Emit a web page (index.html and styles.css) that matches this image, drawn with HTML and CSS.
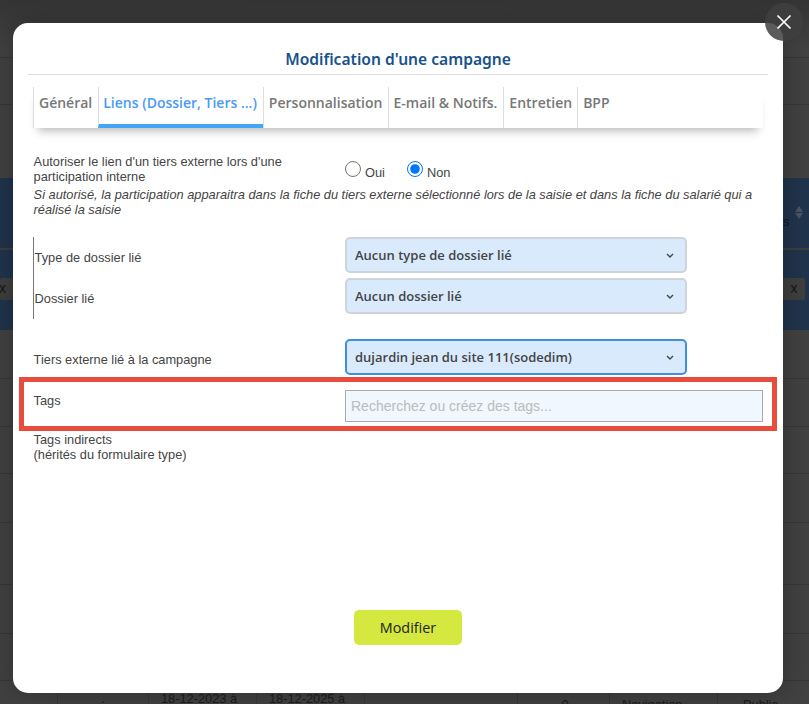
FILE: index.html
```html
<!DOCTYPE html>
<html lang="fr">
<head>
<meta charset="utf-8">
<title>Modification d'une campagne</title>
<link rel="stylesheet" href="styles.css">
</head>
<body>
<div class="table">
  <div class="row r58"></div>
  <div class="row r47"></div>
  <div class="row r74"></div>
  <div class="row blue r70"><span class="sort-s">s</span><span class="sort"><i class="up"></i><i class="down"></i></span></div>
  <div class="row blue r80"><span class="xbox xleft">x</span><span class="xbox xright">x</span></div>
  <div class="row r49"></div>
  <div class="row r48"></div>
  <div class="row r47"></div>
  <div class="row r49"></div>
  <div class="row r62"></div>
  <div class="row r49"></div>
  <div class="row r47"></div>
  <div class="row cells">
    <span class="c c1"></span>
    <span class="c c2">.</span>
    <span class="c c3">18-12-2023 à</span>
    <span class="c c3">18-12-2025 à</span>
    <span class="c c4"></span>
    <span class="c c5">0</span>
    <span class="c c6">Navigation</span>
    <span class="c c7">Public</span>
  </div>
</div>

<div class="modal">
  <h1 class="title">Modification d'une campagne</h1>
  <ul class="tabs">
    <li class="tab wide">Général</li>
    <li class="tab active shifted">Liens (Dossier, Tiers ...)</li>
    <li class="tab wide">Personnalisation</li>
    <li class="tab shifted">E-mail &amp; Notifs.</li>
    <li class="tab">Entretien</li>
    <li class="tab">BPP</li>
  </ul>
  <form class="form">
    <div class="allow">
      <div class="allow-label">Autoriser le lien d'un tiers externe lors d'une participation interne</div>
      <div class="radios">
        <label class="radio"><input type="radio" name="ext"><span>Oui</span></label>
        <label class="radio"><input type="radio" name="ext" checked><span>Non</span></label>
      </div>
    </div>
    <p class="hint">Si autorisé, la participation apparaitra dans la fiche du tiers externe sélectionné lors de la saisie et dans la fiche du salarié qui a réalisé la saisie</p>
    <div class="linked">
      <div class="field">
        <label class="field-label">Type de dossier lié</label>
        <select class="select"><option>Aucun type de dossier lié</option></select>
      </div>
      <div class="field">
        <label class="field-label">Dossier lié</label>
        <select class="select"><option>Aucun dossier lié</option></select>
      </div>
    </div>
    <div class="field third">
      <label class="field-label">Tiers externe lié à la campagne</label>
      <select class="select focus"><option>dujardin jean du site 111(sodedim)</option></select>
    </div>
    <div class="tags">
      <label class="tags-label">Tags</label>
      <input class="tags-input" type="text" placeholder="Recherchez ou créez des tags...">
    </div>
    <div class="indirect">Tags indirects<br>(hérités du formulaire type)</div>
    <div class="actions"><button type="button" class="submit">Modifier</button></div>
  </form>
</div>
<button type="button" class="close" aria-label="Fermer">
  <svg width="16" height="16" viewBox="0 0 16 16"><path d="M1.5 1.5 14.5 14.5M14.5 1.5 1.5 14.5" stroke="#fff" stroke-width="1.7" fill="none"/></svg>
</button>
</body>
</html>
```
FILE: styles.css
```css
* { box-sizing: border-box; }
html, body { margin: 0; height: 100%; }
body {
  position: relative;
  width: 809px;
  height: 704px;
  overflow: hidden;
  background: #424242;
  font-family: "Liberation Sans", Arial, sans-serif;
  font-size: 12.8px;
  color: #444;
}
.table { display: flex; flex-direction: column; height: 704px; overflow: hidden; background: #414141; }
.row { flex: none; position: relative; border-bottom: 1px solid #373737; }
.r58 { height: 58px; background: linear-gradient(#343434, #424242 50px); }
.r47 { height: 47px; }
.r74 { height: 73px; border-bottom: 0; }
.r70 { height: 72px; }
.r80 { height: 80px; }
.r49 { height: 49px; }
.r48 { height: 48px; }
.r62 { height: 62px; }
.blue { background: #20344c; border-bottom: 0; }
.r70 { border-bottom: 2px solid #3e3e3e; }
.sort-s { position: absolute; left: 783px; top: 36px; font-size: 13px; color: #151515; }
.sort { position: absolute; left: 795px; top: 28px; display: flex; flex-direction: column; gap: 1px; }
.sort i { display: block; width: 0; height: 0; border-left: 4px solid transparent; border-right: 4px solid transparent; }
.sort .up { border-bottom: 6px solid #4a5563; }
.sort .down { border-top: 6px solid #4a5563; }
.xbox {
  position: absolute; top: 28px; height: 22px; background: #3f3f3f; color: #161616;
  font-size: 14px; line-height: 21px; border-radius: 2px; text-align: center;
}
.xleft { left: 0; width: 13px; text-align: left; text-indent: -1px; }
.xright { left: 783px; width: 22px; }
.cells { display: flex; height: 23px; border: 0; color: #1c1c1c; font-size: 12.8px; }
.c { flex: none; height: 23px; border-left: 1px solid #383838; white-space: nowrap; text-align: center; line-height: 35px; }
.c1 { width: 57px; border-left: 0; }
.c2 { width: 91px; }
.c3 { width: 108px; padding-right: 7px; }
.c4 { width: 153px; }
.c5 { width: 92px; line-height: 47px; padding-left: 3px; }
.c6 { width: 108px; line-height: 47px; text-align: left; padding-left: 12px; }
.c7 { width: 92px; line-height: 47px; text-align: left; padding-left: 25px; }

.modal {
  position: absolute;
  left: 13px;
  top: 23px;
  width: 770px;
  height: 670px;
  padding: 0 15px;
  background: #fff;
  border-radius: 15px;
  box-shadow: 0 0 26px rgba(0, 0, 0, .28);
}
.title {
  margin: 0;
  height: 52px;
  padding-top: 25px;
  border-bottom: 1px solid #ddd;
  text-align: center;
  font-family: "Noto Sans", sans-serif;
  font-size: 15.6px;
  font-weight: 600;
  line-height: 22px;
  color: #18528c;
}
.tabs {
  display: flex;
  list-style: none;
  margin: 12px 5px 0;
  padding: 0;
  height: 41px;
  background: #fff;
  box-shadow: 0 8px 10px -5px rgba(0, 0, 0, .28);
}
.tab {
  border-left: 1px solid #ddd;
  padding: 0 5px;
  height: 41px;
  font-family: "Open Sans", sans-serif;
  font-size: 14px;
  font-weight: 600;
  line-height: 32px;
  color: #777;
  white-space: nowrap;
}
.tab.wide { padding-right: 6px; }
.tab.shifted { padding: 0 6px 0 4px; }
.tab.active { color: #4a9af5; border-bottom: 4px solid #42a5f5; }
.form { padding: 26px 5px 0; }
.allow { display: flex; }
.allow-label { width: 312px; padding: 0 50px 0 .6px; line-height: 15px; }
.radios { display: flex; gap: 22px; margin-top: 7px; }
.radio { display: flex; align-items: flex-start; height: 23px; }
.radio input { width: 16px; height: 16px; margin: 0 4px 0 0; }
.radio span { padding-top: 4px; line-height: 15px; }
.hint { margin: 3px 0 0; padding-left: .6px; font-style: italic; line-height: 15px; }
.linked {
  display: flex; flex-direction: column; gap: 5px;
  margin-top: 20px; height: 82px;
  border-left: 1px solid #777;
}
.field { display: flex; align-items: center; height: 36px; }
.field-label { width: 312px; padding: 5px 0 0 .6px; }
.linked .field-label { width: 311px; }
.third { margin-top: 20px; }
.select {
  width: 342px;
  height: 36px;
  padding: 0 24px 0 8px;
  appearance: none;
  -webkit-appearance: none;
  border: 2px solid #ced4da;
  border-radius: 5px;
  background: #d9eafd url("data:image/svg+xml,%3Csvg xmlns='http://www.w3.org/2000/svg' viewBox='0 0 8 5'%3E%3Cpath d='M1 1l3 3 3-3' fill='none' stroke='%23444' stroke-width='1.4'/%3E%3C/svg%3E") no-repeat right 11px center / 8px 5px;
  font-family: "Open Sans", sans-serif;
  font-size: 13px;
  font-weight: 550;
  color: #444;
}
.select.focus { border-color: #3f8fe0; }
.tags {
  display: flex;
  height: 54px;
  margin: 2px -14px 0;
  padding: 8px 9px 0;
  border: 5px solid #e74c3c;
  width: 758px;
}
.tags-label { width: 312px; padding: 3px 0 0 .6px; line-height: 15px; }
.tags-input {
  width: 418px;
  height: 32px;
  padding: 0 5px;
  border: 1px solid #aaa;
  background: #f0f7fe;
  font-family: "Liberation Sans", Arial, sans-serif;
  font-size: 14px;
}
.tags-input::placeholder { color: #bbb; opacity: 1; }
.indirect { margin-top: 1px; padding-left: .6px; line-height: 15px; }
.actions { display: flex; justify-content: center; margin-top: 148px; padding-left: 20px; }
.submit {
  width: 108px;
  height: 35px;
  border: 0;
  border-radius: 5px;
  background: #d4e83f;
  font-family: "Open Sans", sans-serif;
  font-size: 14.4px;
  font-weight: 500;
  color: #222;
}
.close {
  position: absolute;
  left: 765px;
  top: 3px;
  width: 38px;
  height: 38px;
  padding: 0;
  display: flex;
  align-items: center;
  justify-content: center;
  border: 0;
  border-radius: 50%;
  background: rgba(64, 64, 64, .85);
}
```
